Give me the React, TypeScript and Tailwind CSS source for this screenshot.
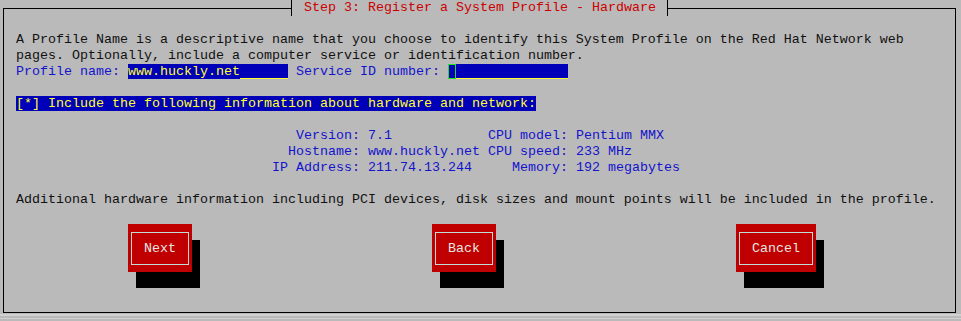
import React from "react";

function Field({ value, width, cursor }: { value: string; width: string; cursor?: boolean }) {
  return (
    <span className={`flex h-[15px] bg-[#0000b8] ${width}`}>
      {cursor && <span className="w-[8px] h-[15px] border border-[#22e022]" />}
      {value && <span className="text-[#ffff30] leading-[15px]">{value}</span>}
      <span className="flex-1 border-b border-[#ffff30]" />
    </span>
  );
}

function Button({ label, width }: { label: string; width: string }) {
  return (
    <div className={`${width} h-[48px] bg-[#c00000] shadow-[8px_16px_0_0_#000] pt-[8px] px-[3px] pb-[7px]`}>
      <div className="h-full border border-[#c4dcd6] flex items-center justify-center text-[#e2e8e4]">
        {label}
      </div>
    </div>
  );
}

export default function App() {
  const info: [string, string, string, string][] = [
    ["Version:", "7.1", "CPU model:", "Pentium MMX"],
    ["Hostname:", "www.huckly.net", "CPU speed:", "233 MHz"],
    ["IP Address:", "211.74.13.244", "Memory:", "192 megabytes"],
  ];
  return (
    <div className="relative w-[961px] h-[321px] overflow-hidden bg-[#bababa] font-['Liberation_Mono','Courier_New',monospace] text-[13.333px] leading-[16px] text-[#111111] whitespace-pre">
      <div className="ml-[3px] mt-[8px] w-[953px] h-[305px] border border-black pl-[12px] pt-[23px]">
        <p>
          A Profile Name is a descriptive name that you choose to identify this System Profile on the Red Hat Network web
          <br />
          pages. Optionally, include a computer service or identification number.
        </p>
        <div className="flex h-[16px] text-[#1414cc]">
          <span>Profile name: </span>
          <Field value="www.huckly.net" width="w-[160px]" />
          <span> Service ID number: </span>
          <Field value="" width="w-[120px]" cursor />
        </div>
        <div className="mt-[16px] h-[16px] flex">
          <span className="h-[15px] leading-[15px] bg-[#0000b8] text-[#ffff30]">
            [*] Include the following information about hardware and network:
          </span>
        </div>
        <div className="mt-[16px] ml-[256px] grid grid-cols-[88px_112px_80px_auto] gap-x-[8px] text-[#1414cc]">
          {info.map((r) => (
            <React.Fragment key={r[0]}>
              <span className="text-right">{r[0]}</span>
              <span>{r[1]}</span>
              <span className="text-right">{r[2]}</span>
              <span>{r[3]}</span>
            </React.Fragment>
          ))}
        </div>
        <p className="mt-[16px]">
          Additional hardware information including PCI devices, disk sizes and mount points will be included in the profile.
        </p>
        <div className="mt-[16px] flex gap-[240px] pl-[112px]">
          <Button label="Next" width="w-[64px]" />
          <Button label="Back" width="w-[64px]" />
          <Button label="Cancel" width="w-[80px]" />
        </div>
      </div>
      <div className="mt-[1px] h-[2px] bg-[#d2d2d2]" />
      <div className="mt-[2px] h-[1px] bg-[#d2d2d2]" />
      <div className="absolute left-[291px] top-0 h-[16px] w-[377px] border-l border-r border-black bg-[#bababa] pl-[12px] text-[#cc0000]">
        Step 3: Register a System Profile - Hardware
      </div>
    </div>
  );
}
